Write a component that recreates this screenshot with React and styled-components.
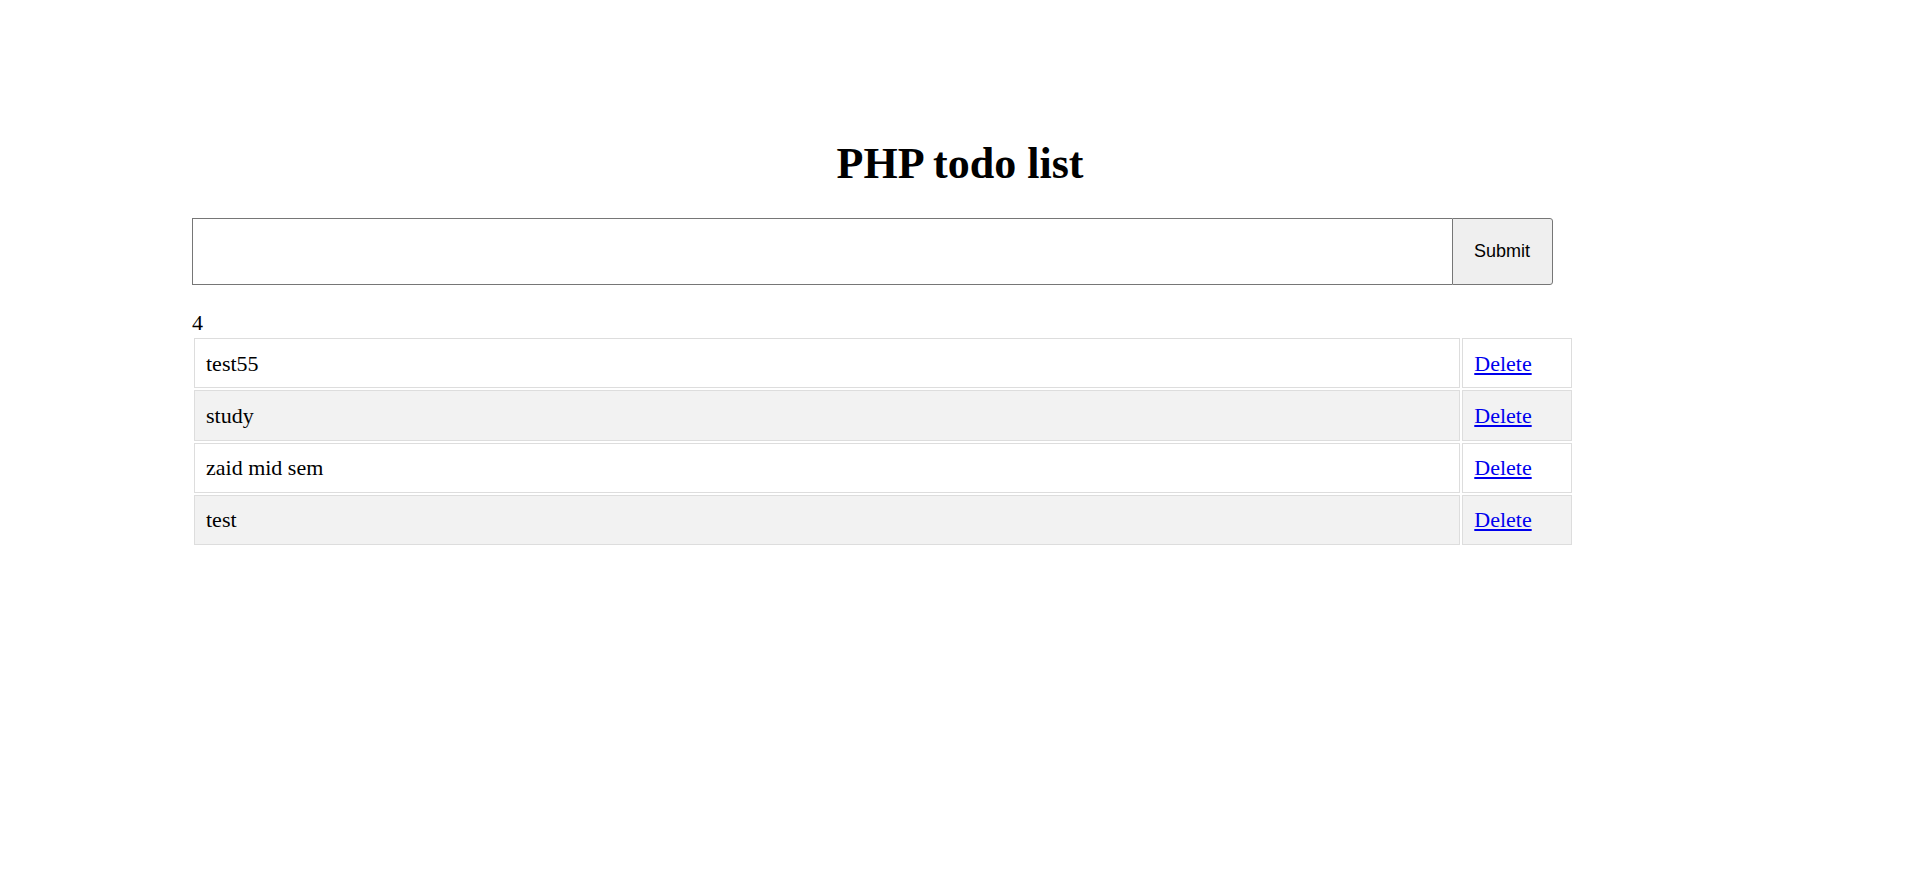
import React, { useState } from "react";
import styled, { createGlobalStyle } from "styled-components";

const GlobalStyle = createGlobalStyle`
  html, body {
    margin: 0;
    padding: 0;
    background: #fff;
  }
  body {
    font-family: "Liberation Serif", "Times New Roman", serif;
    font-size: 22px;
    color: #000;
  }
`;

const Container = styled.div`
  width: 80%;
  margin: 0 auto;
  padding-top: 138px;
`;

const Title = styled.h1`
  margin: 0 0 29px;
  font-size: 44px;
  font-weight: bold;
  text-align: center;
`;

const Form = styled.form`
  display: flex;
  height: 67px;
  margin-bottom: 25px;
`;

const Input = styled.input`
  box-sizing: border-box;
  width: 82%;
  height: 100%;
  margin: 0;
  padding: 0 10px;
  border: 1px solid #767676;
  border-right: none;
  border-radius: 0;
  font-family: "Liberation Sans", Arial, sans-serif;
  font-size: 18px;
  outline: none;
`;

const Button = styled.button`
  box-sizing: border-box;
  width: 101px;
  height: 100%;
  margin: 0;
  padding: 0;
  border: 1px solid #767676;
  border-radius: 0 3px 3px 0;
  background: #efefef;
  color: #000;
  font-family: "Liberation Sans", Arial, sans-serif;
  font-size: 18px;
  cursor: pointer;
`;

const Count = styled.div`
  line-height: 26px;
`;

const Table = styled.table`
  width: 90%;
  border-spacing: 2.45px;
  margin-left: 0;
`;

const Row = styled.tr`
  background: ${(props) => (props.$even ? "#f2f2f2" : "#fff")};
`;

const Cell = styled.td`
  border: 1px solid #ddd;
  padding: 11.5px 11px;
  line-height: 25.3px;
  width: ${(props) => (props.$action ? "8%" : "auto")};
`;

const DeleteLink = styled.a`
  color: #0000ee;
  text-decoration: underline;
  cursor: pointer;
`;

const App = () => {
  const [text, setText] = useState("");
  const [todos, setTodos] = useState([
    { id: 1, name: "test55" },
    { id: 2, name: "study" },
    { id: 3, name: "zaid mid sem" },
    { id: 4, name: "test" },
  ]);

  const addTodo = (e) => {
    e.preventDefault();
    if (!text.trim()) return;
    setTodos([{ id: Date.now(), name: text }, ...todos]);
    setText("");
  };

  const removeTodo = (id) => {
    setTodos(todos.filter((t) => t.id !== id));
  };

  return (
    <>
      <GlobalStyle />
      <Container>
        <Title>PHP todo list</Title>
        <Form onSubmit={addTodo}>
          <Input value={text} onChange={(e) => setText(e.target.value)} />
          <Button type="submit">Submit</Button>
        </Form>
        <Count>{todos.length}</Count>
        <Table>
          <tbody>
            {todos.map((todo, i) => (
              <Row key={todo.id} $even={i % 2 === 1}>
                <Cell>{todo.name}</Cell>
                <Cell $action>
                  <DeleteLink onClick={() => removeTodo(todo.id)}>Delete</DeleteLink>
                </Cell>
              </Row>
            ))}
          </tbody>
        </Table>
      </Container>
    </>
  );
};

export default App;
